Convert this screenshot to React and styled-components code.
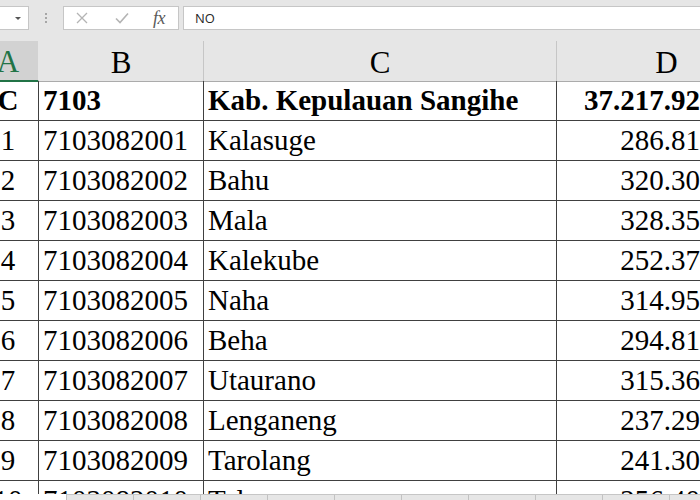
import React from 'react';
import styled, { createGlobalStyle } from 'styled-components';

const GlobalStyle = createGlobalStyle`
  html, body {
    margin: 0;
    padding: 0;
    background: #ffffff;
    overflow: hidden;
  }
`;

const Window = styled.div`
  width: 700px;
  height: 500px;
  display: flex;
  flex-direction: column;
  overflow: hidden;
  background: #ffffff;
`;

const FormulaBar = styled.div`
  flex: none;
  height: 41px;
  box-sizing: border-box;
  padding-top: 6px;
  background: #e6e6e6;
  display: flex;
  align-items: flex-start;
`;

const NameBox = styled.div`
  width: 30px;
  height: 24px;
  margin-left: -1px;
  box-sizing: border-box;
  background: #ffffff;
  border: 1px solid #c6c6c6;
  display: flex;
  align-items: center;
  justify-content: flex-end;
  padding-right: 7px;
`;

const Caret = styled.span`
  width: 0;
  height: 0;
  border-left: 3px solid transparent;
  border-right: 3px solid transparent;
  border-top: 3px solid #555555;
`;

const Grip = styled.div`
  width: 34px;
  height: 24px;
  display: flex;
  flex-direction: column;
  align-items: center;
  justify-content: center;
  gap: 2px;

  span {
    width: 2px;
    height: 2px;
    background: #a6a6a6;
  }
`;

const FxButtons = styled.div`
  width: 116px;
  height: 24px;
  box-sizing: border-box;
  background: #ffffff;
  border: 1px solid #c6c6c6;
  display: flex;
  align-items: center;
  padding-left: 8px;
  gap: 20px;
`;

const IconButton = styled.span`
  width: 20px;
  height: 20px;
  display: flex;
  align-items: center;
  justify-content: center;
  color: #b4b4b4;
`;

const FxLabel = styled.span`
  margin-left: 1px;
  font-family: "Liberation Serif", serif;
  font-style: italic;
  font-size: 18px;
  color: #5a5a5a;
  letter-spacing: -0.5px;
  line-height: 1;
`;

const FormulaInput = styled.div`
  flex: 1;
  height: 24px;
  margin-left: 4px;
  margin-right: -2px;
  box-sizing: border-box;
  background: #ffffff;
  border: 1px solid #c6c6c6;
  padding-left: 11px;
  display: flex;
  align-items: center;
  font-family: "Open Sans", "Liberation Sans", sans-serif;
  font-size: 13px;
  color: #262626;
`;

const SheetViewport = styled.div`
  flex: none;
  height: 453px;
  overflow: hidden;
`;

const SheetGrid = styled.div`
  margin-left: -22px;
  display: grid;
  grid-template-columns: 61px 165px 353px 150px;
  grid-auto-rows: 40px;
  font-family: "Liberation Serif", "DejaVu Serif", serif;
`;

const HeaderCell = styled.div`
  height: 41px;
  box-sizing: border-box;
  display: flex;
  align-items: center;
  justify-content: center;
  padding-left: ${(p) => (p.$right ? '70px' : '0')};
  background: ${(p) => (p.$active ? '#d2d2d2' : '#e6e6e6')};
  border-right: 1px solid ${(p) => (p.$active ? '#e6e6e6' : '#c6c6c6')};
  border-bottom: ${(p) => (p.$active ? '2px solid #217346' : '1px solid #ababab')};
  font-size: 31px;
  color: ${(p) => (p.$active ? '#217346' : '#000000')};
  line-height: 1;
  padding-top: 2px;
`;

const Cell = styled.div`
  height: 40px;
  box-sizing: border-box;
  border-right: 1px solid #404040;
  border-bottom: 1px solid #404040;
  display: flex;
  align-items: center;
  justify-content: ${(p) => (p.$align === 'center' ? 'center' : p.$align === 'right' ? 'flex-end' : 'flex-start')};
  padding: ${(p) => (p.$align === 'right' ? '0 6px 0 0' : p.$align === 'center' ? '0' : '0 0 0 4px')};
  font-size: 29px;
  font-weight: ${(p) => (p.$bold ? 700 : 400)};
  color: #000000;
  white-space: nowrap;
  overflow: hidden;
`;

const TabBar = styled.div`
  flex: none;
  height: 24px;
  display: flex;
  background: #e6e6e6;
  border-top: 1px solid #c6c6c6;
`;

const SheetTab = styled.div`
  width: 67px;
  flex: none;
  box-sizing: border-box;
  margin-top: ${(p) => (p.$active ? '-1px' : '0')};
  background: ${(p) => (p.$active ? '#ffffff' : '#e6e6e6')};
  border-right: 1px solid #c2c2c2;
  text-align: center;
  padding-top: 3px;
  font-family: "Open Sans", "Liberation Sans", sans-serif;
  font-size: 12px;
  font-weight: ${(p) => (p.$active ? 700 : 400)};
  color: ${(p) => (p.$active ? '#217346' : '#444444')};
  white-space: nowrap;
  overflow: hidden;
`;

const columns = ['A', 'B', 'C', 'D'];

const rows = [
  { a: 'C', b: '7103', c: 'Kab. Kepulauan Sangihe', d: '37.217.92', bold: true },
  { a: '1', b: '7103082001', c: 'Kalasuge', d: '286.81' },
  { a: '2', b: '7103082002', c: 'Bahu', d: '320.30' },
  { a: '3', b: '7103082003', c: 'Mala', d: '328.35' },
  { a: '4', b: '7103082004', c: 'Kalekube', d: '252.37' },
  { a: '5', b: '7103082005', c: 'Naha', d: '314.95' },
  { a: '6', b: '7103082006', c: 'Beha', d: '294.81' },
  { a: '7', b: '7103082007', c: 'Utaurano', d: '315.36' },
  { a: '8', b: '7103082008', c: 'Lenganeng', d: '237.29' },
  { a: '9', b: '7103082009', c: 'Tarolang', d: '241.30' },
  { a: '10', b: '7103082010', c: 'Talengen', d: '256.40' },
];

const tabs = ['Tabel 1', 'Tabel 2', 'Tabel 3', 'Tabel 4', 'Tabel 5', 'Tabel 6', 'Tabel 7', 'Tabel 8', 'Tabel 9', 'Tabel 10', 'Tabel 11'];

const App = () => {
  return (
    <Window>
      <GlobalStyle />
      <FormulaBar>
        <NameBox>
          <Caret />
        </NameBox>
        <Grip>
          <span />
          <span />
          <span />
        </Grip>
        <FxButtons>
          <IconButton>
            <svg width="12" height="12" viewBox="0 0 12 12" fill="none" stroke="currentColor" strokeWidth="1.3">
              <path d="M1 1l10 10M11 1L1 11" />
            </svg>
          </IconButton>
          <IconButton>
            <svg width="14" height="12" viewBox="0 0 14 12" fill="none" stroke="currentColor" strokeWidth="1.6">
              <path d="M1 6.5l4 4L13 1.5" />
            </svg>
          </IconButton>
          <FxLabel>fx</FxLabel>
        </FxButtons>
        <FormulaInput>NO</FormulaInput>
      </FormulaBar>

      <SheetViewport>
        <SheetGrid>
          {columns.map((col) => (
            <HeaderCell key={col} $active={col === 'A'} $right={col === 'D'}>
              {col}
            </HeaderCell>
          ))}
          {rows.map((r) => (
            <React.Fragment key={r.b}>
              <Cell $align="center" $bold={r.bold}>{r.a}</Cell>
              <Cell $bold={r.bold}>{r.b}</Cell>
              <Cell $bold={r.bold}>{r.c}</Cell>
              <Cell $align="right" $bold={r.bold}>{r.d}</Cell>
            </React.Fragment>
          ))}
        </SheetGrid>
      </SheetViewport>

      <TabBar>
        {tabs.map((t, i) => (
          <SheetTab key={t} $active={i === 0}>
            {t}
          </SheetTab>
        ))}
      </TabBar>
    </Window>
  );
};

export default App;
